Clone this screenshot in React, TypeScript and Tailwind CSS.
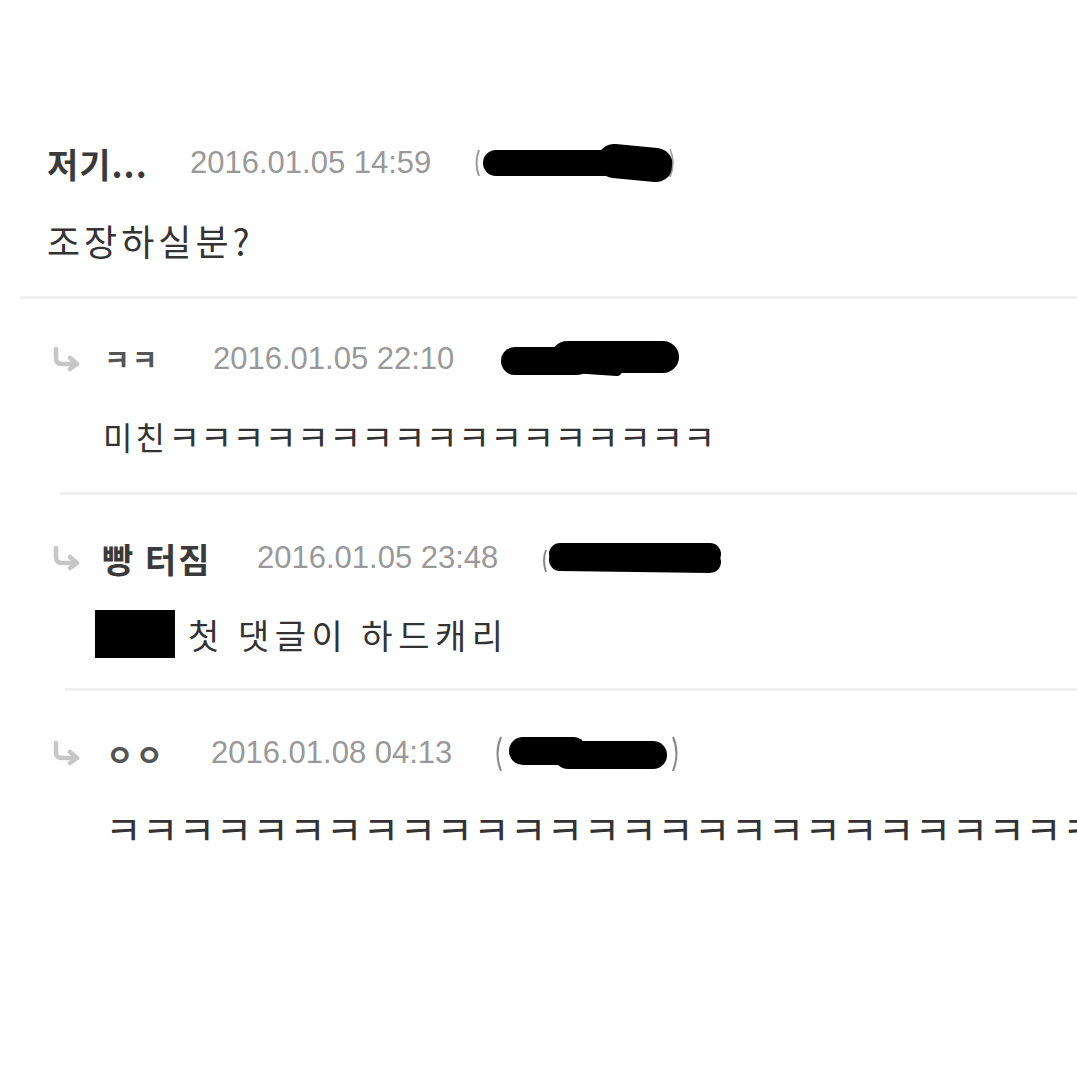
import React from "react";

const KR = { fontFamily: '"Noto Sans CJK KR", "Noto Sans", sans-serif' };
const DATE = { fontFamily: '"Liberation Sans", Arial, sans-serif' };

function ReplyArrow() {
  return (
    <svg width="32" height="26" viewBox="0 0 32 26" className="shrink-0">
      <path d="M6 3 L6 12 Q6 18 12 18 L24 18" fill="none" stroke="#c6c6c6" strokeWidth="4.5" strokeLinecap="round" />
      <path d="M20 12 L27 18 L20 23" fill="none" stroke="#c6c6c6" strokeWidth="4.5" strokeLinecap="round" strokeLinejoin="round" />
    </svg>
  );
}

function Blob({ variant }: { variant: number }) {
  if (variant === 1) {
    return (
      <svg width="205" height="44" viewBox="0 0 205 44" className="shrink-0">
        <path d="M5 9 Q0 22 5 35" fill="none" stroke="#999" strokeWidth="2" />
        <path d="M22 22 L130 22" stroke="#000" strokeWidth="26" strokeLinecap="round" />
        <path d="M140 20 L182 24" stroke="#000" strokeWidth="34" strokeLinecap="round" />
        <path d="M196 8 Q202 22 196 36" fill="none" stroke="#999" strokeWidth="1.5" />
      </svg>
    );
  }
  if (variant === 2) {
    return (
      <svg width="186" height="44" viewBox="0 0 186 44" className="shrink-0">
        <path d="M18 24 L80 24" stroke="#000" strokeWidth="28" strokeLinecap="round" />
        <path d="M70 20 L166 20" stroke="#000" strokeWidth="32" strokeLinecap="round" />
        <path d="M60 30 L120 34" stroke="#000" strokeWidth="10" strokeLinecap="round" />
      </svg>
    );
  }
  if (variant === 3) {
    return (
      <svg width="184" height="44" viewBox="0 0 184 44" className="shrink-0">
        <path d="M4 14 Q0 24 4 36" fill="none" stroke="#888" strokeWidth="2" />
        <path d="M18 18 L168 18" stroke="#000" strokeWidth="22" strokeLinecap="round" />
        <path d="M18 24 L168 26" stroke="#000" strokeWidth="22" strokeLinecap="round" />
      </svg>
    );
  }
  return (
    <svg width="186" height="44" viewBox="0 0 186 44" className="shrink-0">
      <path d="M8 6 Q1 22 8 40" fill="none" stroke="#888" strokeWidth="2" />
      <path d="M30 20 L80 20" stroke="#000" strokeWidth="28" strokeLinecap="round" />
      <path d="M75 24 L160 24" stroke="#000" strokeWidth="28" strokeLinecap="round" />
      <path d="M180 6 Q187 22 180 40" fill="none" stroke="#888" strokeWidth="2" />
    </svg>
  );
}

export default function App() {
  const k17 = "ㅋ".repeat(17);
  const k40 = "ㅋ".repeat(29);
  return (
    <div className="w-[1077px] h-[1077px] bg-white overflow-hidden flex flex-col pt-[143px]" style={KR}>
      {/* Comment 1 */}
      <div className="h-[40px] flex items-center pl-[47px]">
        <span className="text-[34px] font-bold text-[#3a3a3a] tracking-[1px] w-[143px]">저기...</span>
        <span className="text-[31px] text-[#999] w-[284px]" style={DATE}>2016.01.05 14:59</span>
        <Blob variant={1} />
      </div>
      <div className="h-[40px] mt-[37px] flex items-center pl-[47px] text-[36px] text-[#333] tracking-[4px]">조장하실분?</div>
      <div className="h-[3px] mt-[36px] ml-[20px] bg-[#f1f1f1]" />

      {/* Comment 2 */}
      <div className="h-[40px] mt-[40px] flex items-center pl-[50px]">
        <ReplyArrow />
        <span className="ml-[22px] w-[109px] text-[28px] font-bold text-[#555] tracking-[2px]">ㅋㅋ</span>
        <span className="text-[31px] text-[#999] w-[284px]" style={DATE}>2016.01.05 22:10</span>
        <Blob variant={2} />
      </div>
      <div className="h-[40px] mt-[37px] flex items-center pl-[103px] text-[#333] whitespace-nowrap">
        <span className="text-[32px] tracking-[3px]">미친</span>
        <span className="text-[35px] tracking-[0px]">{k17}</span>
      </div>
      <div className="h-[3px] mt-[36px] ml-[60px] bg-[#f1f1f1]" />

      {/* Comment 3 */}
      <div className="h-[40px] mt-[43px] flex items-center pl-[50px]">
        <ReplyArrow />
        <span className="ml-[20px] w-[155px] text-[34px] font-bold text-[#3a3a3a] tracking-[2px]">빵 터짐</span>
        <span className="text-[31px] text-[#999] w-[285px]" style={DATE}>2016.01.05 23:48</span>
        <Blob variant={3} />
      </div>
      <div className="h-[48px] mt-[32px] flex items-center pl-[95px]">
        <div className="w-[80px] h-[48px] bg-black" />
        <span className="ml-[13px] text-[34px] text-[#333] tracking-[5.5px] whitespace-pre">첫 댓글이 하드캐리</span>
      </div>
      <div className="h-[3px] mt-[30px] ml-[65px] bg-[#f1f1f1]" />

      {/* Comment 4 */}
      <div className="h-[40px] mt-[42px] flex items-center pl-[50px]">
        <ReplyArrow />
        <span className="ml-[24px] w-[105px] text-[30px] font-bold text-[#555] tracking-[2px]">ㅇㅇ</span>
        <span className="text-[31px] text-[#999] w-[282px]" style={DATE}>2016.01.08 04:13</span>
        <Blob variant={4} />
      </div>
      <div className="h-[40px] mt-[35px] flex items-center pl-[105px] text-[40px] text-[#333] whitespace-nowrap">{k40}</div>
    </div>
  );
}
